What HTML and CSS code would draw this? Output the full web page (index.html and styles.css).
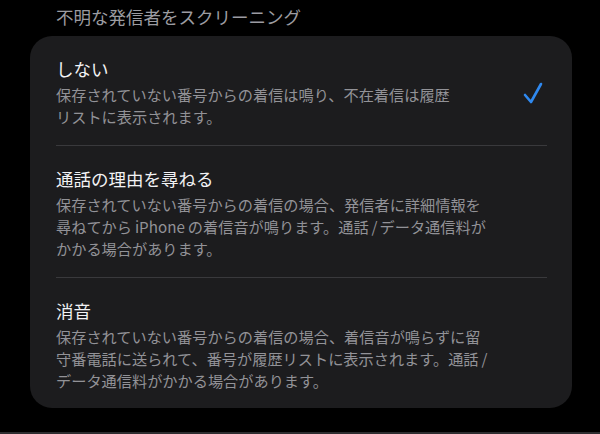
FILE: index.html
```html
<!DOCTYPE html>
<html lang="ja">
<head>
    <meta charset="UTF-8">
    <meta name="viewport" content="width=device-width, initial-scale=1.0">
    <title>不明な発信者をスクリーニング</title>
    <link rel="stylesheet" href="styles.css">
</head>
<body>

<h2 class="section-title">不明な発信者をスクリーニング</h2>

<div class="card">
    <!-- しない -->
    <div class="option">
        <div class="option-text">
            <div class="option-name">しない</div>
            <div class="option-desc">保存されていない番号からの着信は鳴り、不在着信は履歴<br>リストに表示されます。</div>
        </div>
        <svg class="check" width="20" height="22" viewBox="0 0 20 22">
            <polyline points="2,13 8,20 18,2" fill="none" stroke="#2f89f0" stroke-width="2.6" stroke-linecap="round" stroke-linejoin="round"/>
        </svg>
    </div>

    <!-- 通話の理由を尋ねる -->
    <div class="option">
        <div class="option-text">
            <div class="option-name">通話の理由を尋ねる</div>
            <div class="option-desc">保存されていない番号からの着信の場合、発信者に詳細情報を<br>尋ねてから<span class="latin">iPhone</span>の着信音が鳴ります。通話<span class="slash">/</span>データ通信料が<br>かかる場合があります。</div>
        </div>
    </div>

    <!-- 消音 -->
    <div class="option">
        <div class="option-text">
            <div class="option-name">消音</div>
            <div class="option-desc">保存されていない番号からの着信の場合、着信音が鳴らずに留<br>守番電話に送られて、番号が履歴リストに表示されます。通話<span class="slash">/</span><br>データ通信料がかかる場合があります。</div>
        </div>
    </div>
</div>

<div class="bottom-line"></div>

</body>
</html>
```

FILE: styles.css
```css
body {
    margin: 0;
    background-color: #000;
    font-family: "Noto Sans CJK JP", "Noto Sans", sans-serif;
    height: 434px;
    display: flex;
    flex-direction: column;
    overflow: hidden;
}
.section-title {
    margin: 0;
    padding-left: 56px;
    height: 36px;
    line-height: 34px;
    font-size: 17.5px;
    font-weight: normal;
    color: #9c9ca1;
}
.card {
    margin-left: 30px;
    width: 542px;
    background-color: #1c1c1e;
    border-radius: 22px;
}
.option {
    display: flex;
    align-items: center;
    margin: 0 25px 0 26px;
    padding: 22px 0 18px 0;
    border-bottom: 1px solid #39393c;
}
.option:last-child {
    border-bottom: none;
    padding-bottom: 17px;
}
.option-text {
    flex: 1;
}
.option-name {
    font-size: 17.5px;
    line-height: 22px;
    color: #f2f2f4;
    margin-bottom: 3px;
}
.option-desc {
    font-size: 15.2px;
    line-height: 22px;
    color: #929297;
    white-space: nowrap;
}
.latin {
    margin: 0 3px;
}
.slash {
    margin: 0 2px 0 3px;
}
.check {
    margin-right: 4px;
}
.bottom-line {
    margin-top: auto;
    height: 2px;
    background-color: #2e2e30;
}
```
